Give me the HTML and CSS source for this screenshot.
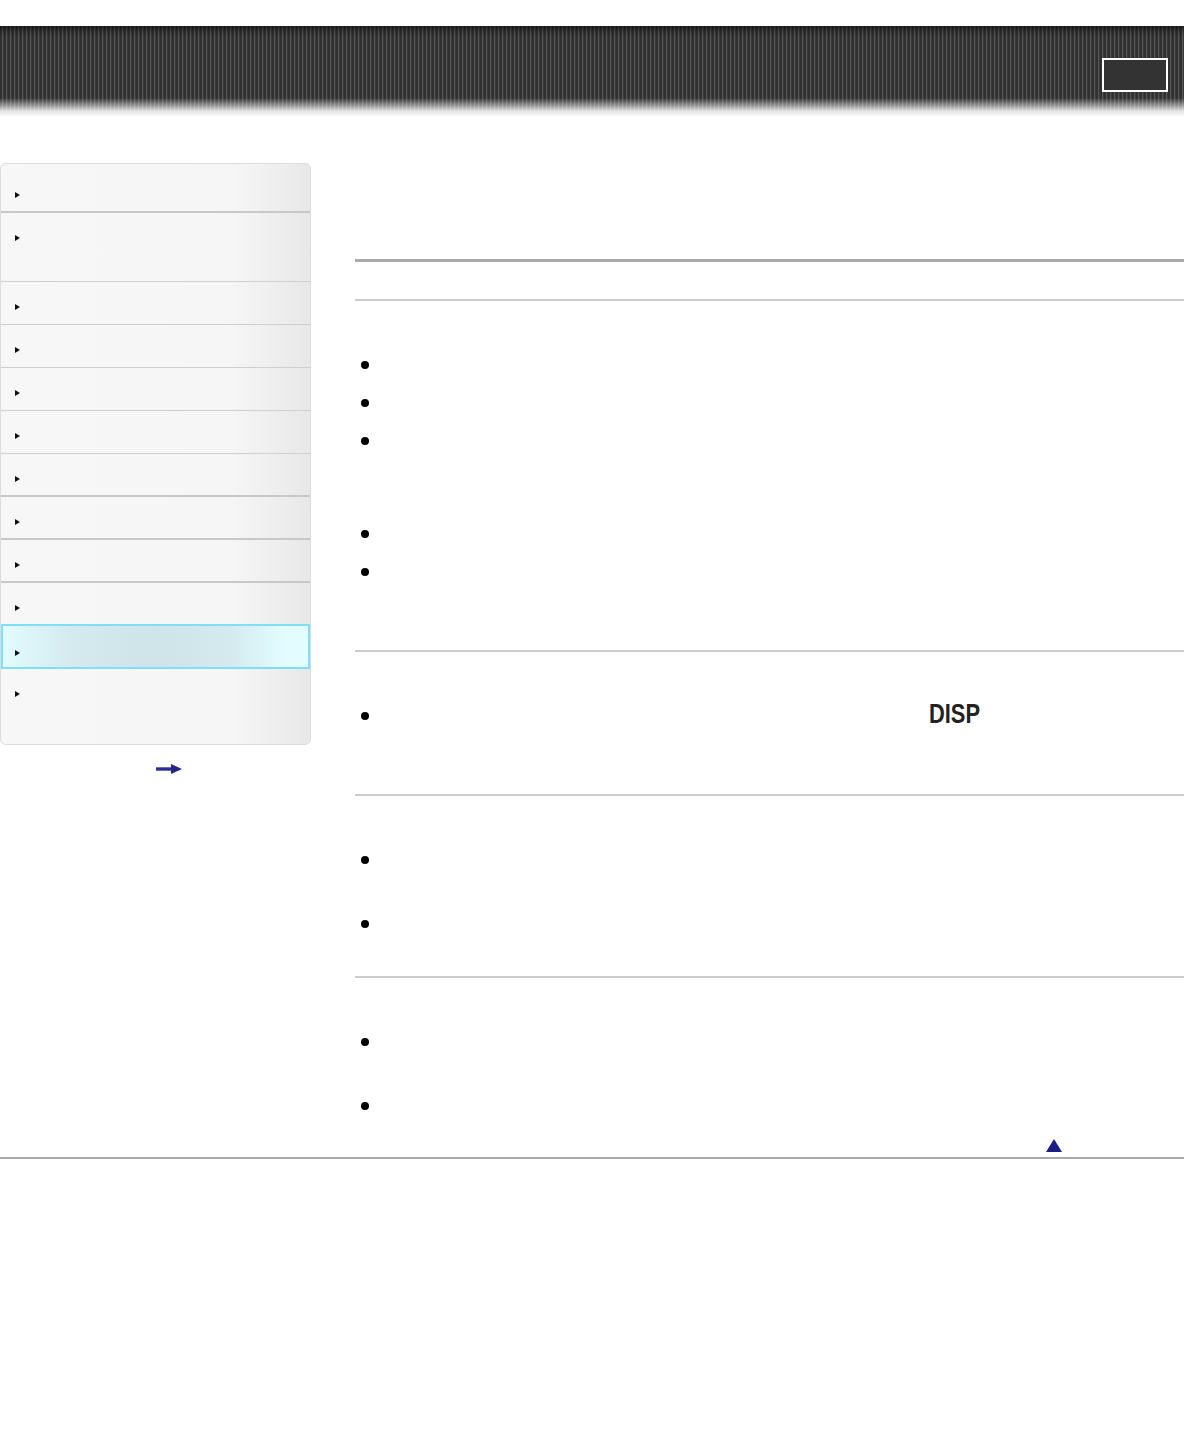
FILE: index.html
```html
<!DOCTYPE html>
<html lang="en">
<head>
<meta charset="utf-8">
<title>Help Guide</title>
<link rel="stylesheet" href="styles.css">
</head>
<body>
<header class="masthead">
  <div class="search-box"></div>
</header>
<div class="layout">
  <aside class="side">
    <nav class="menu">
      <div class="item first h49 thick"><span class="tri"></span></div>
      <div class="item h69"><span class="tri"></span></div>
      <div class="item"><span class="tri"></span></div>
      <div class="item"><span class="tri"></span></div>
      <div class="item"><span class="tri"></span></div>
      <div class="item"><span class="tri"></span></div>
      <div class="item thick"><span class="tri"></span></div>
      <div class="item thick"><span class="tri"></span></div>
      <div class="item thick"><span class="tri"></span></div>
      <div class="item h41 noline"><span class="tri"></span></div>
      <div class="item active"><span class="tri"></span></div>
      <div class="item last"><span class="tri"></span></div>
    </nav>
    <div class="more">
      <svg width="26" height="10" viewBox="0 0 26 10"><rect x="0" y="3.3" width="17" height="3.4" fill="#2e2e8e"/><path d="M15 0 L26 5 L15 10 Z" fill="#24248a"/></svg>
    </div>
  </aside>
  <main class="content">
    <div class="title"></div>
    <div class="rule-thick"></div>
    <div class="subtitle"></div>
    <div class="rule"></div>
    <section class="sec pb60">
      <ul class="list">
        <li></li>
        <li></li>
        <li class="h93"></li>
        <li></li>
        <li></li>
      </ul>
    </section>
    <div class="rule"></div>
    <section class="sec pb60">
      <ul class="list">
        <li><span class="disp">DISP</span></li>
      </ul>
    </section>
    <div class="rule"></div>
    <section class="sec pb34">
      <ul class="list">
        <li class="h64"></li>
        <li></li>
      </ul>
    </section>
    <div class="rule"></div>
    <section class="sec">
      <ul class="list">
        <li class="h64"></li>
        <li></li>
      </ul>
    </section>
    <div class="totop">
      <svg width="16" height="13" viewBox="0 0 16 13"><path d="M8 0 L16 13 L0 13 Z" fill="#1c1c86"/></svg>
    </div>
  </main>
</div>
<div class="footer-rule"></div>
</body>
</html>
```
FILE: styles.css
```css
html, body {
  margin: 0;
  padding: 0;
  background: #fff;
  font-family: "Liberation Sans", Arial, sans-serif;
  color: #222;
}

.masthead {
  margin-top: 26px;
  height: 91px;
  display: flex;
  justify-content: flex-end;
  align-items: flex-start;
  padding: 32px 16px 0 0;
  box-sizing: border-box;
  background:
    linear-gradient(to bottom,
      rgba(0,0,0,0.5) 0px,
      rgba(0,0,0,0.2) 5px,
      rgba(0,0,0,0) 11px,
      rgba(255,255,255,0) 72px,
      rgba(255,255,255,0.45) 79px,
      rgba(255,255,255,0.85) 85px,
      #fff 91px),
    repeating-linear-gradient(to right,
      #303030 0px, #303030 2px,
      #575757 2px, #575757 3px,
      #3a3a3a 3px, #3a3a3a 4px);
}

.search-box {
  width: 66px;
  height: 34px;
  box-sizing: border-box;
  border: 2px solid #fff;
  background: #333;
}

.layout {
  display: flex;
  align-items: flex-start;
  margin-top: 46px;
}

.side {
  width: 311px;
  flex: none;
  margin-right: 44px;
}

.menu {
  border: 1px solid #dcdcdc;
  border-radius: 6px;
  overflow: hidden;
  background: linear-gradient(to right, #f7f7f7 0, #f6f6f6 74%, #e8e8e8 100%);
}

.item {
  height: 43px;
  box-sizing: border-box;
  border-bottom: 1px solid #cfcfcf;
  padding: 22px 0 0 14px;
}
.item.thick { border-bottom: 2px solid #c8c8c8; }
.item.first { padding-top: 28px; }
.item.h49 { height: 49px; }
.item.h69 { height: 69px; }
.item.h41 { height: 41px; }
.item.noline { border-bottom: none; }
.item.active {
  height: 45px;
  border: 2px solid #80def6;
  padding-top: 24px;
  padding-left: 12px;
  background: linear-gradient(to right, #e2fcff 0%, #d4eaee 22%, #cfe4e8 50%, #d4eaee 75%, #e2fcff 92%, #e2fcff 100%);
}
.item.last {
  height: 75px;
  border-bottom: none;
}

.tri {
  display: block;
  width: 0;
  height: 0;
  border-left: 5px solid #111;
  border-top: 3px solid transparent;
  border-bottom: 3px solid transparent;
}

.more {
  padding: 19px 0 0 156px;
  height: 10px;
}
.more svg { display: block; }

.content {
  flex: 1;
  min-width: 0;
}

.title { height: 96px; }
.rule-thick { height: 3px; background: #aaa; }
.subtitle { height: 37px; }
.rule { height: 2px; background: #cccccc; }

.sec { padding-top: 44px; }
.pb60 { padding-bottom: 60px; }
.pb34 { padding-bottom: 34px; }

.list {
  list-style: none;
  margin: 0;
  padding: 0;
}
.list li {
  display: flex;
  align-items: flex-start;
  height: 38px;
  box-sizing: border-box;
}
.list li::before {
  content: "";
  flex: none;
  width: 8px;
  height: 8px;
  border-radius: 50%;
  background: #000;
  margin: 16px 0 0 6px;
}
.list li.h93 { height: 93px; }
.list li.h64 { height: 64px; }

.disp {
  display: inline-block;
  margin-left: 560px;
  margin-top: 4px;
  font-weight: bold;
  font-size: 28px;
  line-height: 28px;
  color: #222;
  transform: scaleX(0.78);
  transform-origin: left center;
}

.totop {
  display: flex;
  justify-content: flex-end;
  padding: 15px 122px 0 0;
  height: 18px;
}
.totop svg { display: block; }

.footer-rule {
  height: 2px;
  background: #aaa;
}
```
